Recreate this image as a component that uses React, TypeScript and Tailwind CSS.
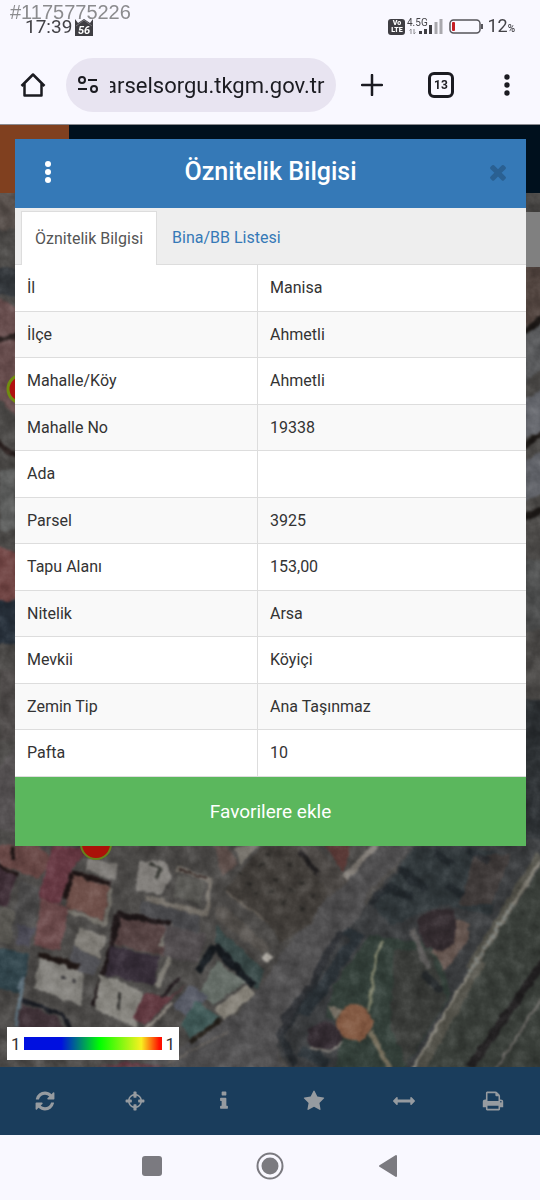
import React, { useState } from "react";

const parcel = [
  { label: "İl", value: "Manisa" },
  { label: "İlçe", value: "Ahmetli" },
  { label: "Mahalle/Köy", value: "Ahmetli" },
  { label: "Mahalle No", value: "19338" },
  { label: "Ada", value: "" },
  { label: "Parsel", value: "3925" },
  { label: "Tapu Alanı", value: "153,00" },
  { label: "Nitelik", value: "Arsa" },
  { label: "Mevkii", value: "Köyiçi" },
  { label: "Zemin Tip", value: "Ana Taşınmaz" },
  { label: "Pafta", value: "10" },
];

const tools = [
  { name: "Yenile", d: "M1639 1056q0 5-1 7-64 268-268 434.5t-478 166.5q-146 0-282.5-55t-243.5-157l-129 129q-19 19-45 19t-45-19-19-45v-448q0-26 19-45t45-19h448q26 0 45 19t19 45-19 45l-137 137q71 66 161 102t187 36q134 0 250-65t186-179q11-17 53-117 8-23 30-23h192q13 0 22.5 9.5t9.5 22.5zm25-800v448q0 26-19 45t-45 19h-448q-26 0-45-19t-19-45 19-45l138-138q-148-137-349-137-134 0-250 65t-186 179q-11 17-53 117-8 23-30 23h-199q-13 0-22.5-9.5t-9.5-22.5v-7q65-268 270-434.5t480-166.5q146 0 284 55.5t245 156.5l130-129q19-19 45-19t45 19 19 45z" },
  { name: "Konum", d: "M1325 1024h-109q-26 0-45-19t-19-45v-128q0-26 19-45t45-19h109q-32-108-112.5-188.5t-188.5-112.5v109q0 26-19 45t-45 19h-128q-26 0-45-19t-19-45v-109q-108 32-188.5 112.5t-112.5 188.5h109q26 0 45 19t19 45v128q0 26-19 45t-45 19h-109q32 108 112.5 188.5t188.5 112.5v-109q0-26 19-45t45-19h128q26 0 45 19t19 45v109q108-32 188.5-112.5t112.5-188.5zm339-192v128q0 26-19 45t-45 19h-143q-37 161-154.5 278.5t-278.5 154.5v143q0 26-19 45t-45 19h-128q-26 0-45-19t-19-45v-143q-161-37-278.5-154.5t-154.5-278.5h-143q-26 0-45-19t-19-45v-128q0-26 19-45t45-19h143q37-161 154.5-278.5t278.5-154.5v-143q0-26 19-45t45-19h128q26 0 45 19t19 45v143q161 37 278.5 154.5t154.5 278.5h143q26 0 45 19t19 45z" },
  { name: "Bilgi", d: "M1216 1344v128q0 26-19 45t-45 19h-512q-26 0-45-19t-19-45v-128q0-26 19-45t45-19h64v-384h-64q-26 0-45-19t-19-45v-128q0-26 19-45t45-19h384q26 0 45 19t19 45v576h64q26 0 45 19t19 45zm-128-1152v192q0 26-19 45t-45 19h-256q-26 0-45-19t-19-45v-192q0-26 19-45t45-19h256q26 0 45 19t19 45z" },
  { name: "Favoriler", d: "M1728 647q0 22-26 48l-363 354 86 500q1 7 1 20 0 21-10.5 35.5t-30.5 14.5q-19 0-40-12l-449-236-449 236q-22 12-40 12-21 0-31.5-14.5t-10.5-35.5q0-6 2-20l86-500-364-354q-25-27-25-48 0-37 56-46l502-73 225-455q19-41 49-41t49 41l225 455 502 73q56 9 56 46z" },
  { name: "Ölç", d: "M1792 896q0 26-19 45l-256 256q-19 19-45 19t-45-19-19-45v-128h-1024v128q0 26-19 45t-45 19-45-19l-256-256q-19-19-19-45t19-45l256-256q19-19 45-19t45 19 19 45v128h1024v-128q0-26 19-45t45-19 45 19l256 256q19 19 19 45z" },
  { name: "Yazdır", d: "M448 1536h896v-256h-896v256zm0-640h896v-384h-160q-40 0-68-28t-28-68v-160h-640v640zm1152 64q0-26-19-45t-45-19-45 19-19 45 19 45 45 19 45-19 19-45zm128 0v416q0 13-9.5 22.5t-22.5 9.5h-224v160q0 40-28 68t-68 28h-960q-40 0-68-28t-28-68v-160h-224q-13 0-22.5-9.5t-9.5-22.5v-416q0-79 56.5-135.5t135.5-56.5h64v-544q0-40 28-68t68-28h672q40 0 88 20t76 48l152 152q28 28 48 76t20 88v256h64q79 0 135.5 56.5t56.5 135.5z" },
];

const timesPath = "M1490 1322q0 40-28 68l-136 136q-28 28-68 28t-68-28l-294-294-294 294q-28 28-68 28t-68-28l-136-136q-28-28-28-68t28-68l294-294-294-294q-28-28-28-68t28-68l136-136q28-28 68-28t68 28l294 294 294-294q28-28 68-28t68 28l136 136q28 28 28 68t-28 68l-294 294 294 294q28 28 28 68z";

export default function App() {
  return (
    <div className="relative flex min-h-screen w-full flex-col bg-[#f9f8ff] font-['Roboto','Noto_Sans',sans-serif] text-[#333]">
      <span className="absolute left-[10px] top-0 font-['Liberation_Sans',Arial,sans-serif] text-[20px] leading-6 text-[#8b8b8e]">#1175775226</span>
      <StatusBar />
      <AddressBar />
      <main className="grid flex-1">
        <div className="relative col-start-1 row-start-1 flex flex-col">
          <div className="flex h-[68px]">
            <div className="w-[69px] bg-[#80401f]" />
            <div className="flex-1 bg-[#00101d]" />
          </div>
          <div className="relative flex-1 overflow-hidden bg-[#4a4846]">
            <Satellite />
          </div>
          <div className="absolute right-0 top-[87px] h-[55px] w-[14px] bg-[#808080]" />
          <Legend />
        </div>
        <div className="z-10 col-start-1 row-start-1 pb-4 pl-[15px] pr-[14px] pt-[14px]">
          <ParcelDialog />
        </div>
      </main>
      <MapToolbar />
      <SystemNav />
    </div>
  );
}

function StatusBar() {
  return (
    <div className="flex h-[46px] items-center pl-[25px] pr-[25px] pt-2 text-[#434247]">
      <span className="text-[19px] leading-5">17:39</span>
      <svg className="ml-[3px] size-[18px]" viewBox="0 0 18 18" aria-hidden="true">
        <path d="M0 1 3 5 9 1l6 4 3-4v17H0z" fill="#3f3e43" />
        <path d="M1 8 9 2l8 6" fill="none" stroke="#77767b" />
        <text x="9" y="16" textAnchor="middle" fontSize="11" fontWeight="700" fontStyle="italic" fill="#fff">56</text>
      </svg>
      <div className="ml-auto flex items-center">
        <div className="flex h-4 w-[17px] flex-col items-center justify-center rounded-[3px] bg-[#3f3e43] text-[7px] font-black leading-[7px] text-white">
          <span>Vo</span>
          <span>LTE</span>
        </div>
        <svg className="ml-[2px] h-[18px] w-9" viewBox="0 0 36 18" aria-hidden="true">
          <text x="0" y="8" fontSize="10" fill="#434247">4.5G</text>
          <path d="M4 16v-5M2.500 12.500 4 11M7 11v5M7 16l1.500-1.500" stroke="#8d8c91" fill="none" />
          <path d="M13.500 16v-3M18.500 16v-5M23.500 16V7" stroke="#3f3e43" strokeWidth="3" />
          <path d="M29 16V4M34 16V1" stroke="#a9a8ad" strokeWidth="3" />
        </svg>
        <svg className="ml-[6px] h-4 w-[35px]" viewBox="0 0 35 16" aria-hidden="true">
          <rect x="1" y="1" width="30" height="13" rx="3.500" fill="none" stroke="#55545a" strokeWidth="1.500" />
          <rect x="3" y="3" width="3" height="9" rx="1" fill="#c41c22" />
          <path d="M33 5v5" stroke="#55545a" strokeWidth="2" />
        </svg>
        <span className="ml-[3px] text-[18px] leading-5">12<span className="text-[10px] font-medium">%</span></span>
      </div>
    </div>
  );
}

function AddressBar() {
  return (
    <div className="flex h-[79px] items-center border-b border-[#8a8a90] text-[#1b1b21]">
      <button aria-label="Ana sayfa" className="flex w-[66px] justify-center">
        <svg className="size-[26px]" viewBox="0 0 26 26" fill="none" stroke="currentColor" strokeWidth="2.500">
          <path d="M1.500 14 13 2.500 24.500 14M4.500 11.500V23.500h17V11.500" strokeLinejoin="round" />
        </svg>
      </button>
      <div className="flex h-[54px] min-w-0 flex-1 items-center rounded-full bg-[#e8e4f1] pl-[11px] pr-[10px]">
        <svg className="h-[18px] w-[22px] shrink-0" viewBox="0 0 22 18" fill="none" stroke="currentColor" strokeWidth="2" aria-hidden="true">
          <circle cx="5" cy="4" r="3" />
          <path d="M11 4h9M1 13h9" />
          <circle cx="17" cy="13" r="3" />
        </svg>
        <input
          aria-label="Adres"
          defaultValue="arselsorgu.tkgm.gov.tr"
          className="ml-[11px] w-full min-w-0 flex-1 bg-transparent pt-[2px] -indent-[5px] text-[22px] leading-7 outline-none"
        />
      </div>
      <button aria-label="Yeni sekme" className="flex w-[72px] justify-center">
        <svg className="size-[22px]" viewBox="0 0 22 22" stroke="currentColor" strokeWidth="2.500" strokeLinecap="round">
          <path d="M11 1v20M1 11h20" />
        </svg>
      </button>
      <button aria-label="Sekmeler" className="flex w-[66px] justify-center">
        <span className="flex size-[26px] items-center justify-center rounded-[6px] border-3 border-[#1b1b21] text-[12px] font-bold leading-4">13</span>
      </button>
      <button aria-label="Menü" className="flex w-[66px] justify-center">
        <svg className="h-[22px] w-[6px]" viewBox="0 0 6 22" fill="currentColor">
          <circle cx="3" cy="3" r="2.700" />
          <circle cx="3" cy="11" r="2.700" />
          <circle cx="3" cy="19" r="2.700" />
        </svg>
      </button>
    </div>
  );
}

function ParcelDialog() {
  const [tab, setTab] = useState("info");

  return (
    <section role="dialog" aria-label="Öznitelik Bilgisi" className="bg-white">
      <div className="grid h-[69px] grid-cols-[66px_1fr_66px] items-center bg-[#3579b7] pb-[3px] text-white">
        <button aria-label="Seçenekler" className="flex justify-center">
          <svg className="h-6 w-[6px]" viewBox="0 0 6 24" fill="currentColor">
            <circle cx="3" cy="4" r="3" />
            <circle cx="3" cy="12" r="3" />
            <circle cx="3" cy="20" r="3" />
          </svg>
        </button>
        <h1 className="text-center text-[25px] font-medium leading-7">Öznitelik Bilgisi</h1>
        <button aria-label="Kapat" className="flex justify-end pr-4">
          <svg className="size-6" viewBox="0 0 1792 1792" fill="#2a6092">
            <path d={timesPath} />
          </svg>
        </button>
      </div>

      <div role="tablist" className="flex h-[57px] items-end border-b border-[#ddd] bg-[#eee] pl-[6px] text-[16px] leading-6">
        <TabButton active={tab === "info"} onClick={() => setTab("info")}>Öznitelik Bilgisi</TabButton>
        <TabButton active={tab === "list"} onClick={() => setTab("list")}>Bina/BB Listesi</TabButton>
      </div>

      <table className="w-full table-fixed border-separate border-spacing-0 text-[16px] leading-6">
        <tbody>
          {parcel.map(row => (
            <tr key={row.label} className="h-[46px] odd:h-[47px] even:bg-[#f9f9f9]">
              <th scope="row" className="w-[243px] border-b border-r border-[#ddd] pl-3 text-left font-normal">{row.label}</th>
              <td className="border-b border-[#ddd] pl-3">{row.value}</td>
            </tr>
          ))}
        </tbody>
      </table>

      <button className="h-[69px] w-full bg-[#5bb75d] text-[19px] leading-6 text-white">Favorilere ekle</button>
    </section>
  );
}

function TabButton({ active, onClick, children }: { active: boolean, onClick: () => void, children: React.ReactNode }) {
  return (
    <button
      role="tab"
      aria-selected={active}
      onClick={onClick}
      className={active
        ? "-mb-px h-[54px] border border-b-0 border-[#ddd] bg-white px-[13px] text-[#555]"
        : "h-[53px] px-[15px] text-[#3579b7]"}
    >
      {children}
    </button>
  );
}

function Legend() {
  return (
    <div className="absolute bottom-[7px] left-[7px] flex h-[33px] w-[172px] items-center justify-between bg-white px-1 text-[17px] leading-5">
      <span>1</span>
      <div className="h-[13px] w-[138px] bg-[linear-gradient(to_right,#0010e0_0%,#0010e0_27%,#00ff00_55%,#f8f020_85%,#ff1000_98%)]" />
      <span>1</span>
    </div>
  );
}

function MapToolbar() {
  return (
    <div className="flex h-[68px] bg-[#1a3d5c] pr-[2px] text-[#969ba0]">
      {tools.map(tool => (
        <button key={tool.name} aria-label={tool.name} className="flex flex-1 items-center justify-center">
          <svg className="size-[22px]" viewBox="0 0 1792 1792" fill="currentColor">
            <path d={tool.d} />
          </svg>
        </button>
      ))}
    </div>
  );
}

function SystemNav() {
  return (
    <div className="flex h-[65px] items-center justify-center pb-1 pr-px text-[#7b7a80]">
      <button aria-label="Son uygulamalar" className="flex w-[118px] justify-center">
        <span className="size-5 rounded-[3px] bg-[#7b7a80]" />
      </button>
      <button aria-label="Ana ekran" className="flex w-[118px] justify-center">
        <svg className="size-7" viewBox="0 0 28 28">
          <circle cx="14" cy="14" r="12.500" fill="none" stroke="currentColor" strokeWidth="2" />
          <circle cx="14" cy="14" r="8.500" fill="currentColor" />
        </svg>
      </button>
      <button aria-label="Geri" className="flex w-[118px] justify-center">
        <svg className="h-6 w-5" viewBox="0 0 20 24" fill="currentColor" stroke="currentColor" strokeWidth="2" strokeLinejoin="round">
          <path d="M2 12 18 2v20z" />
        </svg>
      </button>
    </div>
  );
}

// Aerial view under the dialog, dimmed by the modal backdrop
function Satellite() {
  return (
    <svg className="absolute inset-0 h-full w-full" viewBox="0 193 540 874" preserveAspectRatio="xMidYMax slice" aria-hidden="true">
      <defs>
        <filter id="soft" x="0" y="0" width="100%" height="100%" colorInterpolationFilters="sRGB">
          <feTurbulence type="fractalNoise" baseFrequency="0.09" numOctaves="4" seed="7" result="n" />
          <feDisplacementMap in="SourceGraphic" in2="n" scale="6" xChannelSelector="R" yChannelSelector="G" result="d" />
          <feGaussianBlur in="d" stdDeviation="0.8" />
        </filter>
        <filter id="grain" x="0" y="0" width="100%" height="100%" colorInterpolationFilters="sRGB">
          <feTurbulence type="fractalNoise" baseFrequency="0.07" numOctaves="4" seed="3" />
          <feColorMatrix values="1.200 0 0 0 -0.100  1.200 0 0 0 -0.100  1.200 0 0 0 -0.100  0 0 0 0 1" />
        </filter>
      </defs>
      <g filter="url(#soft)">
        <path d="M-10 180h570v900H-10z" fill="#4b4947" />

        {/* left strip */}
        <path d="M-5 190h25v40H-5z" fill="#58504c" />
        <path d="M-5 268h25v28H-5z" fill="#34383c" />
        <path d="M-5 296 20 310v110L-5 395z" fill="#684e4e" />
        <path d="M-5 340 20 335M-5 440 20 460" stroke="#261d1c" strokeWidth="5" />
        <path d="M0 470h16v60H0z" fill="#5d5e5d" />
        <path d="M-5 545 20 555v40L-5 610z" fill="#704544" />
        <path d="M-5 600h25v44H-5z" fill="#27303a" />
        <path d="M0 670h18v70H0z" fill="#4e4a49" />
        <path d="m-5 775 25-35v90H-5z" fill="#555152" />

        {/* right strip */}
        <path d="M522 265h22v60h-22z" fill="#51443f" />
        <path d="M522 330 545 315v50l-23 20z" fill="#5b5c5e" />
        <path d="m520 335 25-18M520 450l25-20M520 520l25-12" stroke="#1c1816" strokeWidth="6" />
        <path d="m522 400 22-10v40l-22 10zM522 460l22-8v40l-22 12z" fill="#62646a" />
        <path d="M522 560h22v70h-22z" fill="#4c4d4d" />
        <path d="M522 700h22v160h-22z" fill="#2c3033" />

        {/* road and empty lot */}
        <path d="m375 840 45 0-55 55 2 32-90 118 4 30H120l60-28 58-34 26-30 16-28 42-50 4-14 18-10z" fill="#504f50" />
        <path d="m282 846 26-6 42 40-20 16z" fill="#4a4643" />
        <path d="m224 890 38-44h34l32 48-16 30-32 18-12-18z" fill="#423e3a" />
        <path d="m226 892 42 30" stroke="#655f58" strokeWidth="2" />
        <path d="M240 870v4M262 862v4M276 878v4M290 862v4M302 880v4M284 900v4M302 906v4M256 892v4M314 894v4M250 882v3M268 852v3M272 890v3M290 888v3" stroke="#302e2b" strokeWidth="4" />
        <path d="m322 840 30 0-8 33z" fill="#5b3b38" />
        <path d="m345 878 35-38" stroke="#817c76" strokeWidth="6" />
        <path d="m300 852 18 22" stroke="#211f20" strokeWidth="5" />
        <path d="m214 846 14 0 10 18-16 12z" fill="#5b4c48" />
        <path d="m234 846 26-2-20 20z" fill="#77736c" />

        {/* houses */}
        <path d="m-5 846 40-4 18 20-16 16L0 864z" fill="#684846" />
        <path d="m-4 866 20 10-8 32-12-4z" fill="#3c2c34" />
        <path d="M-5 862 18 876M14 846l-2 16" stroke="#201616" strokeWidth="4" />
        <path d="m52 846 38 0-18 24-12 34-22-5z" fill="#653842" />
        <path d="m20 880 20 8-6 40-24 10z" fill="#4b4a4a" />
        <path d="m0 906 16 4-6 36-14-4z" fill="#5d5b56" />
        <path d="m18 924 18 4-6 18-14-2z" fill="#4e4d58" />
        <path d="m70 873 40 14-8 34-36-15z" fill="#6f504a" />
        <path d="m72 872 38 12M71 873l-6 26" stroke="#1f1515" strokeWidth="4" />
        <path d="m112 888-8 36-36-14" fill="none" stroke="#76736c" strokeWidth="4" />
        <path d="m88 858 30 6-4 16-28-10z" fill="#7c7975" />
        <path d="m41 898 28 10-9 44-26-6z" fill="#6c4b4c" />
        <path d="m80 926 26 12-7 20-25-12z" fill="#827f79" />
        <path d="m74 946 26 14-6 16-26-10z" fill="#55555a" />
        <path d="m138 862 28-2 6 18-12 18-24-6z" fill="#827f7b" />
        <path d="m150 864 10 4-4 10" fill="none" stroke="#3c3d38" strokeWidth="4" />
        <path d="m178 874 26 8-4 22-26-8z" fill="#5c5b57" />
        <path d="m176 868 34 12-4 34-60-16" fill="none" stroke="#757069" strokeWidth="5" />
        <path d="m180 870 26 8" stroke="#2a1d1b" strokeWidth="2" />
        <path d="m140 900 60 16-2 18-26-8-32-10z" fill="#4a4a4d" />
        <path d="m120 914 50 14-6 28-50-12z" fill="#574444" />
        <path d="m118 914 52 10M118 914l-6 30-18 62" fill="none" stroke="#1e1718" strokeWidth="6" />
        <path d="m110 945 50 12-6 28-48-10z" fill="#372e39" />
        <path d="m160 946 10-16 4 18-8 20-10 18" fill="none" stroke="#7f7c75" strokeWidth="5" />
        <path d="m40 956 44 16-3 34-48-18z" fill="#85837e" />
        <path d="m38 954 42 13" stroke="#1f1715" strokeWidth="6" />
        <path d="m64 976v4M73 980v4" stroke="#38373a" strokeWidth="3" />
        <path d="m100 974 43 18-7 36-41-19z" fill="#87857f" />
        <path d="m120 992-2 18" stroke="#383735" strokeWidth="3" />
        <path d="m145 992 24 6 18-16-42 44-12-8z" fill="#603940" />
        <path d="m162 998 18-20" stroke="#231c1f" strokeWidth="4" />
        <path d="m22 1004 34 12 14 20H16z" fill="#403238" />
        <path d="m22 1000 40 14 10 18" fill="none" stroke="#17191f" strokeWidth="4" />
        <path d="M-5 946 30 955l-8 40-27-8z" fill="#31444b" />
        <path d="m18 990 6-14-8 52" fill="none" stroke="#60717c" strokeWidth="3" />
        <path d="m165 925 42 10-10 28-34-8z" fill="#514c4e" />
        <path d="m215 906 14 4 40 36-6 8-46-34z" fill="#57534f" />
        <path d="m215 925 50 45-8 20-42-42z" fill="#3b4b4a" />
        <path d="m214 946-16 26M214 946l40 40" stroke="#15191d" strokeWidth="8" />
        <path d="m217 960 28 22-32 24-14-12z" fill="#666e68" />
        <path d="m246 985 10 8-32 28-10-12z" fill="#88847b" />
        <path d="m190 984 18 12-18 24-18-14z" fill="#5a5d68" />
        <path d="m196 1000 24 18-30 20-8-14z" fill="#415a58" />
        <path d="m190 1042 30-22" stroke="#231f1a" strokeWidth="5" />
        <path d="m266 952 7 5-5 6-6-5z" fill="#a7a39c" />
        <path d="m146 1030 26-28" stroke="#8a847d" strokeWidth="3" />
        <path d="m95 1067 30-5 40 5z" fill="#633943" />
        <path d="m168 1062 60-30" stroke="#66625e" strokeWidth="2" />

        {/* park */}
        <path d="m418 840 130 0v230H290l-14-24 30-52 44-66 20-28z" fill="#3b3d3f" />
        <path d="m370 935 70 10 10 50-46 75h-70l10-48-20-4 10-34z" fill="#34403a" />
        <path d="m395 950 35 0 16 50-40 65-16-40z" fill="#3b3d3a" />
        <path d="m415 846 60 0 30 10-14 60-50-12-50 22-18-20z" fill="#31383b" />
        <path d="m475 855 35 0-18 50-32 0z" fill="#403b3a" />
        <path d="m372 900 18-12 20 8M400 870l24 18M438 855l12 8M472 852l14 8M450 888l10 6M340 935l-16 24-10 25-30 34M310 990l-30 45 14 26M425 975l14 14" fill="none" stroke="#1b2025" strokeWidth="8" strokeLinecap="round" strokeLinejoin="round" opacity="0.600" />
        <path d="m345 930 12 8-22 30-12 20-20 26M300 1050l28 14" fill="none" stroke="#2b3237" strokeWidth="12" />
        <path d="m452 918 18 6-4 20-22 26-12-18z" fill="#655650" />
        <path d="m416 920 20-12 18 2 2 12-2 22-12 8-16-4-6-14z" fill="#342c30" />
        <path d="m412 930 16 38" stroke="#5c5a59" strokeWidth="6" />
        <path d="m384 942-8 12-4 34-3 24" fill="none" stroke="#7d806a" strokeWidth="3" />
        <path d="m371 1032 20 38" stroke="#77705e" strokeWidth="5" />
        <circle cx="354" cy="1023" r="18" fill="#855c45" />
        <path d="m328 1006 14 2-8 12z" fill="#7c756a" />
        <path d="m308 1030 12-8 14 2 8 14-8 14-22-4-6-8z" fill="#332b31" />
        <path d="m310 1048 20 5 12-12" fill="none" stroke="#7b7872" strokeWidth="2" />

        {/* railway */}
        <path d="m548 850-10 20-70 110-50 90h130z" fill="#3a3f3a" />
        <path d="m475 970-55 100M452 1010l30-50M470 970l70-115" stroke="#53524a" strokeWidth="10" />
        <path d="m540 862-40 62-50 80-38 66" fill="none" stroke="#817e75" strokeWidth="3" />
        <path d="m512 905-45 72" stroke="#777a75" strokeWidth="5" strokeDasharray="4 3" />
        <path d="M548 955 470 1067" stroke="#211f20" strokeWidth="9" />
        <path d="M548 990 495 1070" stroke="#64635f" strokeWidth="3" />
      </g>
      <rect x="0" y="193" width="540" height="874" filter="url(#grain)" className="opacity-35 mix-blend-soft-light" />
      <circle cx="22" cy="389" r="14" fill="#b01010" stroke="#718c10" strokeWidth="3" />
      <circle cx="96" cy="844" r="15" fill="#aa1208" stroke="#66811c" strokeWidth="2" />
    </svg>
  );
}
